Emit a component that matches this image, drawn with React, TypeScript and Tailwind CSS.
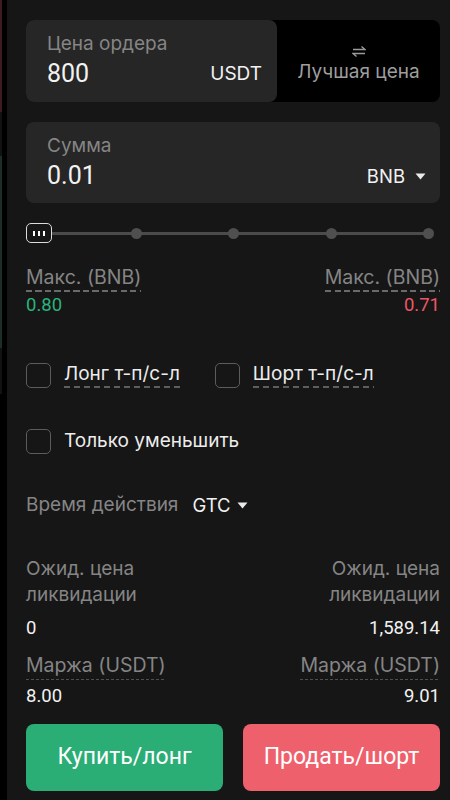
import React from "react";

const inter = { fontFamily: "Inter, 'Noto Sans', sans-serif" } as const;
const roboto = { fontFamily: "Roboto, 'Noto Sans', sans-serif" } as const;

function Caret() {
  return (
    <svg width="11" height="7" viewBox="0 0 11 7" className="inline-block">
      <path d="M0.5 0.5 H10.5 L5.5 6.5 Z" fill="#eaeaea" />
    </svg>
  );
}

function Box() {
  return <div className="w-[25px] h-[25px] rounded-[5px] border-[1.5px] border-[#5c5c5c] shrink-0" />;
}

export default function App() {
  const dots = [110, 207, 305, 402];
  return (
    <div className="w-[450px] h-[800px] bg-black flex overflow-hidden" style={inter}>
      <div className="w-[7px] h-full bg-black flex flex-col">
        <div className="w-[2px] h-[112px] bg-[#3b1c21]" />
        <div className="w-[2px] h-[44px] bg-[#121212]" />
        <div className="w-[2px] h-[192px] bg-[#1b2f28]" />
        <div className="w-[2px] h-[46px] bg-[#121212]" />
      </div>
      <div className="flex-1 bg-[#161616] pl-[19px] pr-[10px] pt-[20px] flex flex-col">
        {/* Price card */}
        <div className="h-[82px] flex bg-black rounded-[8px]">
          <div className="w-[251px] h-full bg-[#262626] rounded-[8px] pl-[21px] pr-[15px] flex flex-col">
            <div className="mt-[12px] h-[24px] leading-[24px] text-[19px] text-[#858585]">Цена ордера</div>
            <div className="mt-[6px] h-[24px] flex items-center justify-between">
              <span className="text-[25px] text-[#f2f2f2] leading-[24px]" style={roboto}>800</span>
              <span className="text-[19px] text-[#f2f2f2] leading-[24px]">USDT</span>
            </div>
          </div>
          <div className="flex-1 flex flex-col items-center pt-[25px]">
            <svg width="14" height="13" viewBox="0 0 14 13">
              <path d="M1 4.5 H13 L9.5 1.5" stroke="#9a9a9a" strokeWidth="1.4" fill="none" />
              <path d="M13 8.5 H1 L4.5 11.5" stroke="#9a9a9a" strokeWidth="1.4" fill="none" />
            </svg>
            <div className="mt-[2px] text-[19px] leading-[24px] text-[#9e9e9e]">Лучшая цена</div>
          </div>
        </div>

        {/* Amount card */}
        <div className="mt-[20px] h-[81px] bg-[#262626] rounded-[8px] pl-[21px] pr-[14px] flex flex-col">
          <div className="mt-[12px] h-[24px] leading-[24px] text-[19px] text-[#858585]">Сумма</div>
          <div className="mt-[6px] h-[24px] flex items-center justify-between">
            <span className="text-[25px] text-[#f2f2f2] leading-[24px]" style={roboto}>0.01</span>
            <span className="flex items-center gap-[10px] text-[18.5px] text-[#f2f2f2] leading-[24px]">
              BNB <Caret />
            </span>
          </div>
        </div>

        {/* Slider */}
        <div className="mt-[20px] h-[20px] relative">
          <div className="absolute left-[13px] right-[12px] top-[9px] h-[3px] bg-[#4b4b4b]" />
          {dots.map((x) => (
            <div
              key={x}
              className="absolute top-[5px] w-[11px] h-[11px] rounded-full bg-[#4f4f4f]"
              style={{ left: x - 5 }}
            />
          ))}
          <div className="absolute left-0 top-0 w-[26px] h-[20px] rounded-[5px] border-[1.5px] border-[#dcdcdc] bg-[#161616] flex items-center justify-center gap-[3px]">
            <div className="w-[2px] h-[5px] bg-white" />
            <div className="w-[2px] h-[5px] bg-white" />
            <div className="w-[2px] h-[5px] bg-white" />
          </div>
        </div>

        {/* Max */}
        <div className="mt-[22px] flex justify-between">
          <div className="flex flex-col items-start">
            <div className="flex flex-col">
              <span className="text-[19.5px] leading-[24px] text-[#858585]">Макс. (BNB)</span>
              <div className="mt-[1px] h-[1.5px] bg-[repeating-linear-gradient(90deg,#6a6a6a_0_6px,transparent_6px_9.5px)]" />
            </div>
            <span className="text-[18.5px] leading-[27px] text-[#2bb37b]" style={roboto}>0.80</span>
          </div>
          <div className="flex flex-col items-end">
            <div className="flex flex-col">
              <span className="text-[19.5px] leading-[24px] text-[#858585]">Макс. (BNB)</span>
              <div className="mt-[1px] h-[1.5px] bg-[repeating-linear-gradient(90deg,#6a6a6a_0_6px,transparent_6px_9.5px)]" />
            </div>
            <span className="text-[18.5px] leading-[27px] text-[#ec5766]" style={roboto}>0.71</span>
          </div>
        </div>

        {/* TP/SL */}
        <div className="mt-[44px] h-[25px] flex items-center">
          <Box />
          <div className="ml-[13px] flex flex-col">
            <span className="text-[19px] leading-[24px] text-[#ededed]">Лонг т-п/с-л</span>
            <div className="h-[1.5px] bg-[repeating-linear-gradient(90deg,#5e5e5e_0_6px,transparent_6px_10px)]" />
          </div>
          <div className="ml-[35px]"><Box /></div>
          <div className="ml-[13px] flex flex-col">
            <span className="text-[19px] leading-[24px] text-[#ededed]">Шорт т-п/с-л</span>
            <div className="h-[1.5px] bg-[repeating-linear-gradient(90deg,#5e5e5e_0_6px,transparent_6px_10px)]" />
          </div>
        </div>

        <div className="mt-[41px] h-[25px] flex items-center">
          <Box />
          <span className="ml-[13px] text-[19px] leading-[24px] text-[#ededed]">Только уменьшить</span>
        </div>

        {/* Time in force */}
        <div className="mt-[40px] h-[24px] flex items-center">
          <span className="text-[19px] text-[#858585]">Время действия</span>
          <span className="ml-[14px] text-[18.5px] text-[#f2f2f2]">GTC</span>
          <span className="ml-[6px] flex items-center"><Caret /></span>
        </div>

        {/* Liquidation */}
        <div className="mt-[38px] flex justify-between">
          <div className="text-[19px] leading-[26px] text-[#858585]">Ожид. цена<br />ликвидации</div>
          <div className="text-[19px] leading-[26px] text-[#858585] text-right">Ожид. цена<br />ликвидации</div>
        </div>
        <div className="mt-[7px] flex justify-between text-[18.5px] leading-[26px] text-[#f2f2f2]" style={roboto}>
          <span>0</span>
          <span>1,589.14</span>
        </div>

        {/* Margin */}
        <div className="mt-[12px] flex justify-between">
          <div className="flex flex-col">
            <span className="text-[19.5px] leading-[24px] text-[#858585]">Маржа (USDT)</span>
            <div className="mt-[2px] h-[1px] bg-[repeating-linear-gradient(90deg,#4f4f4f_0_3px,transparent_3px_5px)]" />
          </div>
          <div className="flex flex-col">
            <span className="text-[19.5px] leading-[24px] text-[#858585]">Маржа (USDT)</span>
            <div className="mt-[2px] h-[1px] bg-[repeating-linear-gradient(90deg,#4f4f4f_0_3px,transparent_3px_5px)]" />
          </div>
        </div>
        <div className="mt-[4px] flex justify-between text-[18.5px] leading-[24px] text-[#f2f2f2]" style={roboto}>
          <span>8.00</span>
          <span>9.01</span>
        </div>

        {/* Buttons */}
        <div className="mt-[16px] h-[67px] flex gap-[20px]">
          <div className="flex-1 rounded-[8px] bg-[#2bad76] flex items-center justify-center text-[23px] text-white" style={roboto}>Купить/лонг</div>
          <div className="flex-1 rounded-[8px] bg-[#ef606d] flex items-center justify-center text-[23px] text-white" style={roboto}>Продать/шорт</div>
        </div>
      </div>
    </div>
  );
}
